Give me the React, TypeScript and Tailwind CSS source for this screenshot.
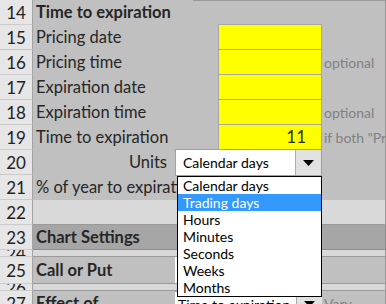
const rowHead =
  "flex w-[33px] shrink-0 items-center justify-center overflow-hidden border-r border-b border-r-[#a3a3a3] border-b-[#cbcbcb] bg-[#e6e6e6] text-[17px] leading-none text-[#222]";

function Head({ n }: { n: number }) {
  return <div className={rowHead}>{n}</div>;
}

function Label({ children, bold }: { children?: React.ReactNode; bold?: boolean }) {
  return (
    <div
      className={`flex w-[144px] shrink-0 items-center whitespace-nowrap pl-[3px] text-[16.5px] text-[#262626] ${bold ? "font-bold" : ""}`}
    >
      {children}
    </div>
  );
}

function Yellow({ value }: { value?: string }) {
  return (
    <div className="flex w-[104px] shrink-0 items-center justify-end border-x border-b border-[#a6a6a6] bg-[#ffff00] pr-[15px] text-[17px] text-[#263300]">
      {value}
    </div>
  );
}

function Note({ children }: { children?: React.ReactNode }) {
  return (
    <div className="flex w-[64px] shrink-0 items-center overflow-hidden whitespace-nowrap border-r border-[#9a9a9a] pl-[2px] text-[14px] text-[#808080]">
      {children}
    </div>
  );
}

function Arrow() {
  return (
    <div className="flex w-[26px] shrink-0 items-center justify-center border-l border-[#adadad] bg-[#e1e1e1]">
      <svg width="11" height="6" viewBox="0 0 11 6">
        <polygon points="0,0 11,0 5.5,6" fill="#000" />
      </svg>
    </div>
  );
}

const units = ["Calendar days", "Trading days", "Hours", "Minutes", "Seconds", "Weeks", "Months"];

export default function App() {
  return (
    <div className="relative h-[304px] w-[386px] overflow-hidden bg-[#c0c0c0] font-[Lato,'Liberation_Sans',sans-serif]">
      {/* row 14 */}
      <div className="flex h-[25px]">
        <Head n={14} />
        <Label bold>Time to expiration</Label>
        <div className="w-[16px] shrink-0" />
        <div className="w-[25px] shrink-0 border-t border-[#9a9a9a]" />
        <div className="w-[104px] shrink-0 border-t border-b border-[#9a9a9a] border-b-[#a6a6a6]" />
        <div className="w-[64px] shrink-0 border-t border-r border-[#9a9a9a]" />
      </div>
      {/* rows 15-19 */}
      {[
        ["Pricing date", "", ""],
        ["Pricing time", "", "optional"],
        ["Expiration date", "", ""],
        ["Expiration time", "", "optional"],
        ["Time to expiration", "11", 'if both "Pricing date" and "Expiration date"'],
      ].map(([label, value, note], i) => (
        <div key={label} className="flex h-[25px]">
          <Head n={15 + i} />
          <Label>{label}</Label>
          <div className="w-[41px] shrink-0" />
          <Yellow value={value} />
          <Note>{note}</Note>
        </div>
      ))}
      {/* row 20 */}
      <div className="flex h-[25px]">
        <Head n={20} />
        <div className="flex w-[144px] shrink-0 items-center justify-end pr-[10px] text-[16.5px] text-[#262626]">
          Units
        </div>
        <div className="w-[145px] shrink-0" />
        <Note />
      </div>
      {/* row 21 */}
      <div className="flex h-[25px]">
        <Head n={21} />
        <Label>% of year to expiration</Label>
        <div className="w-[145px] shrink-0" />
        <Note />
      </div>
      {/* row 22 */}
      <div className="flex h-[25px]">
        <Head n={22} />
        <div className="flex-1 border-r border-b border-[#9a9a9a] bg-[#d9d9d9]" />
      </div>
      {/* row 23 */}
      <div className="flex h-[25px]">
        <Head n={23} />
        <div className="flex flex-1 items-center border-r border-b border-[#8c8c8c] bg-[#a6a6a6] pl-[3px] text-[16.5px] font-bold text-[#262626]">
          Chart Settings
        </div>
      </div>
      {/* row 24 */}
      <div className="flex h-[7px]">
        <Head n={24} />
        <div className="flex-1 border-r border-b border-[#9a9a9a] bg-[#d9d9d9]" />
      </div>
      {/* row 25 */}
      <div className="flex h-[27px]">
        <Head n={25} />
        <div className="flex w-[142px] shrink-0 items-center border-b border-[#9a9a9a] pl-[3px] text-[16.5px] font-bold text-[#262626]">
          Call or Put
        </div>
        <div className="w-[147px] shrink-0 border-b border-[#9a9a9a] bg-white" />
        <div className="w-[64px] shrink-0 border-r border-b border-[#9a9a9a]" />
      </div>
      {/* row 26 */}
      <div className="flex h-[7px]">
        <Head n={26} />
        <div className="flex-1 border-r border-b border-[#9a9a9a] bg-[#d9d9d9]" />
      </div>
      {/* row 27 */}
      <div className="flex h-[25px]">
        <Head n={27} />
        <div className="flex w-[142px] shrink-0 items-center overflow-hidden whitespace-nowrap pl-[3px] text-[16.5px] font-bold text-[#262626]">
          Effect of
        </div>
        <div className="flex w-[147px] shrink-0 border-t border-[#a0a0a0] bg-white">
          <div className="flex flex-1 items-center pl-[3px] text-[14px] text-black">Time to expiration</div>
          <Arrow />
        </div>
        <Note>Vary</Note>
      </div>

      {/* units combo box */}
      <div className="absolute left-[175px] top-[149px] flex h-[27px] w-[147px] border border-[#a0a0a0] bg-white">
        <div className="flex flex-1 items-center pl-[7px] text-[14px] text-black">Calendar days</div>
        <Arrow />
      </div>
      {/* open list */}
      <div className="absolute left-[177px] top-[176px] w-[145px] border border-black bg-white">
        {units.map((u, i) => (
          <div
            key={u}
            className={`h-[17px] pl-[5px] text-[14px] leading-[17px] ${i === 1 ? "bg-[#3399ff] text-white" : "text-black"}`}
          >
            {u}
          </div>
        ))}
      </div>
    </div>
  );
}
